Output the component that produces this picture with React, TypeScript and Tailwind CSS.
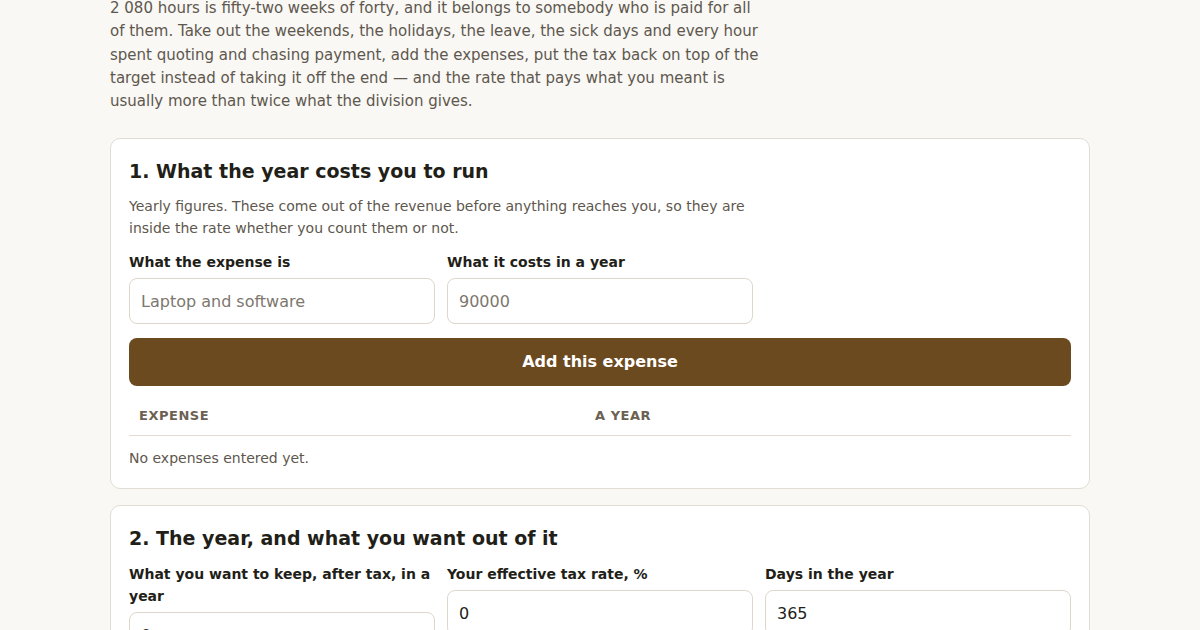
import React from "react";

const font = { fontFamily: '"DejaVu Sans", sans-serif' };

export default function App() {
  return (
    <div className="min-h-[630px] bg-[#f9f8f5] text-[#221e18]" style={font}>
      <div className="mx-auto w-[980px] -mt-[3px]">
        <p className="max-w-[652px] text-[15px] leading-[23.3px] text-[#5e574d]">
          2 080 hours is fifty-two weeks of forty, and it belongs to somebody who is paid for all of them. Take out the weekends, the holidays, the leave, the sick days and every hour spent quoting and chasing payment, add the expenses, put the tax back on top of the target instead of taking it off the end — and the rate that pays what you meant is usually more than twice what the division gives.
        </p>

        <section className="mt-[25px] rounded-[10px] border border-[#e2ddd3] bg-white px-[18px] pt-[18px] pb-[19px]">
          <h2 className="text-[19px] font-bold leading-[28px] text-[#221e18]">1. What the year costs you to run</h2>
          <p className="mt-[10px] max-w-[640px] text-[14px] leading-[22px] text-[#5e574d]">
            Yearly figures. These come out of the revenue before anything reaches you, so they are inside the rate whether you count them or not.
          </p>
          <div className="mt-[12px] grid grid-cols-3 gap-x-[12px]">
            <label className="flex flex-col">
              <span className="text-[14px] font-bold leading-[22px] text-[#221e18]">What the expense is</span>
              <input
                className="mt-[5px] h-[46px] rounded-[8px] border border-[#ddd7cc] bg-white px-[11px] text-[16px] text-[#221e18] outline-none placeholder:text-[#7d776e]"
                placeholder="Laptop and software"
                style={font}
              />
            </label>
            <label className="flex flex-col">
              <span className="text-[14px] font-bold leading-[22px] text-[#221e18]">What it costs in a year</span>
              <input
                className="mt-[5px] h-[46px] rounded-[8px] border border-[#ddd7cc] bg-white px-[11px] text-[16px] text-[#221e18] outline-none placeholder:text-[#7d776e]"
                placeholder="90000"
                style={font}
              />
            </label>
          </div>
          <button
            className="mt-[14px] h-[48px] w-full rounded-[8px] bg-[#6c4a20] text-[16px] font-bold text-white"
            style={font}
          >
            Add this expense
          </button>
          <div className="mt-[12px] grid grid-cols-[456px_1fr] border-b border-[#e2ddd3] pb-[10px] pt-[9px]">
            <div className="pl-[10px] text-[13px] font-bold leading-[18px] tracking-[0.04em] text-[#6b6152]">EXPENSE</div>
            <div className="pl-[10px] text-[13px] font-bold leading-[18px] tracking-[0.04em] text-[#6b6152]">A YEAR</div>
          </div>
          <p className="mt-[11px] text-[14px] leading-[22px] text-[#5e574d]">No expenses entered yet.</p>
        </section>

        <section className="mt-[16px] rounded-[10px] border border-[#e2ddd3] bg-white px-[18px] pt-[18px] pb-[19px]">
          <h2 className="text-[19px] font-bold leading-[28px] text-[#221e18]">2. The year, and what you want out of it</h2>
          <div className="mt-[11px] grid grid-cols-3 gap-x-[12px]">
            <label className="flex flex-col">
              <span className="text-[14px] font-bold leading-[22px] text-[#221e18]">What you want to keep, after tax, in a year</span>
              <input
                className="mt-[5px] h-[46px] rounded-[8px] border border-[#ddd7cc] bg-white px-[11px] text-[16px] text-[#221e18] outline-none"
                defaultValue="0"
                style={font}
              />
            </label>
            <label className="flex flex-col">
              <span className="text-[14px] font-bold leading-[22px] text-[#221e18]">Your effective tax rate, %</span>
              <input
                className="mt-[5px] h-[46px] rounded-[8px] border border-[#ddd7cc] bg-white px-[11px] text-[16px] text-[#221e18] outline-none"
                defaultValue="0"
                style={font}
              />
            </label>
            <label className="flex flex-col">
              <span className="text-[14px] font-bold leading-[22px] text-[#221e18]">Days in the year</span>
              <input
                className="mt-[5px] h-[46px] rounded-[8px] border border-[#ddd7cc] bg-white px-[11px] text-[16px] text-[#221e18] outline-none"
                defaultValue="365"
                style={font}
              />
            </label>
          </div>
        </section>
      </div>
    </div>
  );
}
